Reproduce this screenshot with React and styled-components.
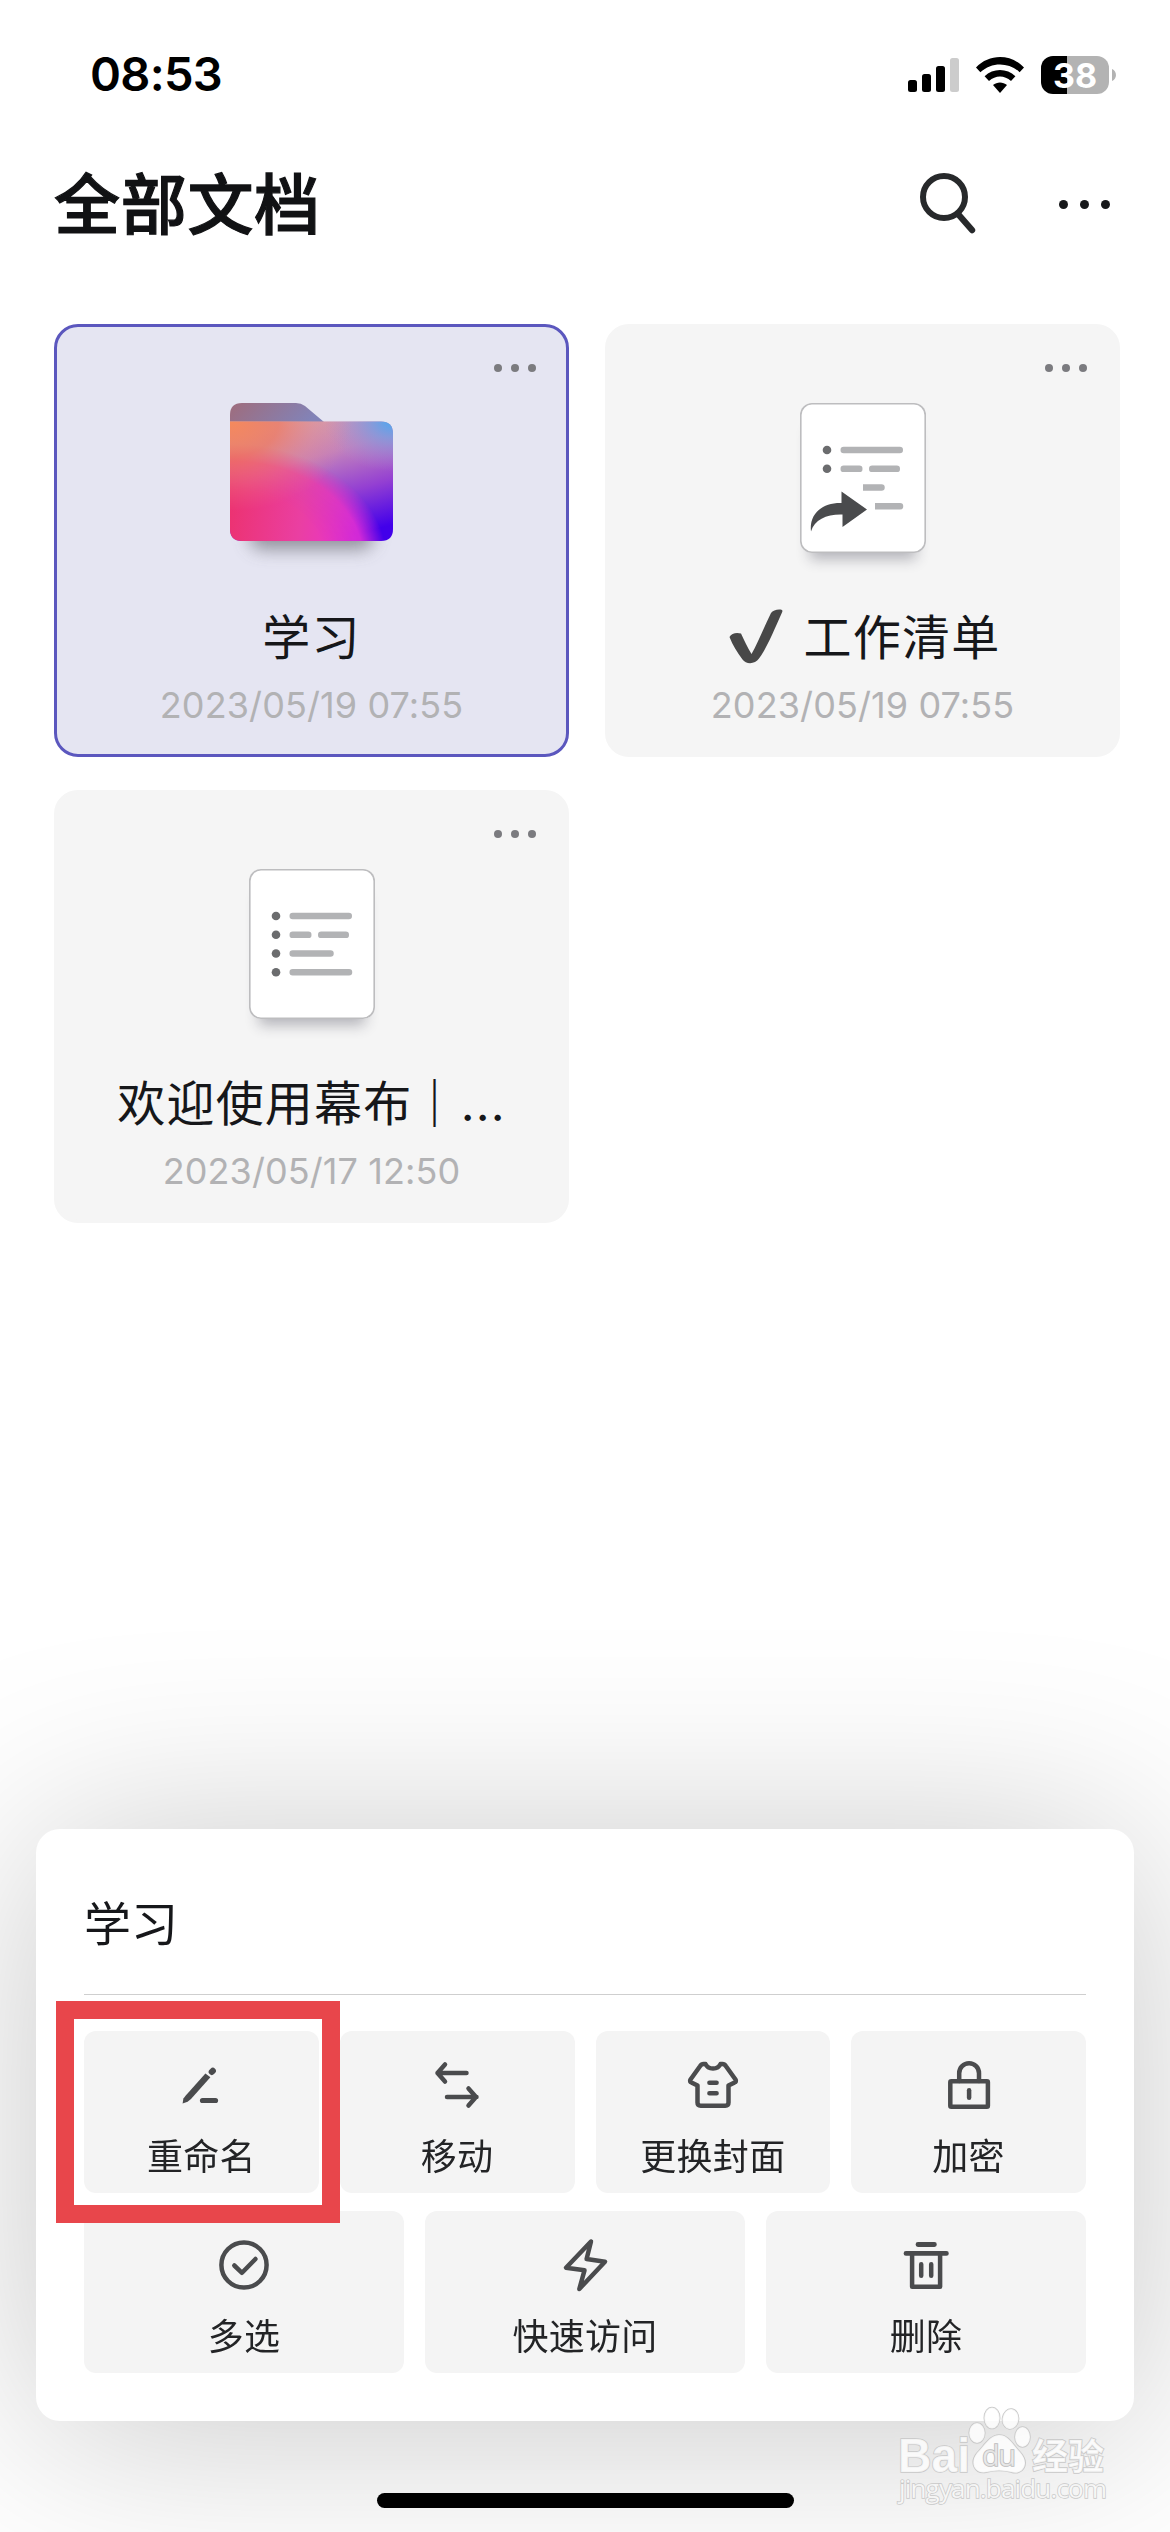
import React from 'react';
import styled, { createGlobalStyle } from 'styled-components';

const GlobalStyle = createGlobalStyle`
  * {
    box-sizing: border-box;
  }
  body {
    margin: 0;
    background: #fff;
    font-family: Inter, 'Noto Sans CJK SC', sans-serif;
  }
  svg {
    display: block;
    overflow: visible;
  }
`;

const docs = [
  { title: '学习', date: '2023/05/19 07:55', type: 'folder', selected: true },
  { title: '工作清单', date: '2023/05/19 07:55', type: 'shared', checked: true },
  { title: '欢迎使用幕布', more: '...', date: '2023/05/17 12:50', type: 'doc' }
];

const EditIcon = () => (
  <Icon viewBox="0 0 54 54">
    <path
      d="M31.4 15.4 L12 37.2 L9.4 40.4 L8.6 45.6 L13.6 43.8 L17 41 L36.4 19.2 Z"
      fill="currentColor"
      stroke="none"
    />
    <path d="M37.8 13.9 L38.8 12.9" strokeWidth="6.2" />
    <path d="M28.5 42.5 H41.5" strokeWidth="5.2" />
  </Icon>
);

const MoveIcon = () => (
  <Icon viewBox="0 0 54 54">
    <path d="M36.5 15 H7.5 M15 6.5 L7.5 15 L15 23.5" />
    <path d="M17 39 H46.5 M38.5 30.5 L46 39 L38.5 47.5" />
  </Icon>
);

const CoverIcon = () => (
  <Icon viewBox="0 0 54 54">
    <path d="M17.5 6 H19.5 C22 12 32 12 34.5 6 H36.5 C38 6 39 6.8 40 8.3 L49.5 21.5 C50.5 23 49.8 24 48.6 24.4 L42.5 27.5 V44.5 C42.5 46.8 41.5 47.7 39.3 47.7 H14.7 C12.5 47.7 11.5 46.8 11.5 44.5 V27.5 L5.4 24.4 C4.2 24 3.5 23 4.5 21.5 L14 8.3 C15 6.8 16 6 17.5 6 Z" />
    <path d="M23.4 24.7 H30.6 M23.4 35.3 H30.6" />
  </Icon>
);

const LockIcon = () => (
  <Icon viewBox="0 0 54 54">
    <rect x="8.3" y="23.3" width="37.6" height="25.4" rx="1" />
    <path d="M17.2 23 V15.2 A9.9 9.9 0 0 1 37 15.2 V23" />
    <path d="M27.1 32.3 V39.7" />
  </Icon>
);

const CheckIcon = () => (
  <Icon viewBox="0 0 54 54">
    <circle cx="27" cy="27" r="22.6" />
    <path d="M17.3 27.5 L25 34.8 L38.5 21" />
  </Icon>
);

const BoltIcon = () => (
  <Icon viewBox="0 0 54 54">
    <path d="M33 3.5 L8 29.7 L26.5 32.3 L21.3 51 L47 23.7 L28.6 21 Z" />
  </Icon>
);

const TrashIcon = () => (
  <Icon viewBox="0 0 54 54">
    <path d="M19 6.5 H35.4 M7 15.4 H47.4" strokeWidth="4.8" />
    <path d="M13.1 17 V48.7 H41.1 V17" />
    <path d="M22.2 26.3 V37.7 M32.2 26.3 V37.7" />
  </Icon>
);

const rowOne = [
  { label: '重命名', icon: EditIcon, marked: true },
  { label: '移动', icon: MoveIcon },
  { label: '更换封面', icon: CoverIcon },
  { label: '加密', icon: LockIcon }
];

const rowTwo = [
  { label: '多选', icon: CheckIcon },
  { label: '快速访问', icon: BoltIcon },
  { label: '删除', icon: TrashIcon }
];

const StatusBar = () => (
  <Status>
    <Time>08:53</Time>
    <StatusIcons>
      <svg width="51" height="34" viewBox="0 0 51 34">
        <rect x="0" y="22" width="9" height="12" rx="2.5" />
        <rect x="14" y="16" width="9" height="18" rx="2.5" />
        <rect x="28" y="8" width="9" height="26" rx="2.5" />
        <rect x="42" y="0" width="9" height="34" rx="2.5" fill="#ccc" />
      </svg>
      <svg width="48" height="36" viewBox="0 0 48 36">
        <path d="M0 10.5 C13 -3.5 35 -3.5 48 10.5 L43.6 15.2 C32.5 4.8 15.5 4.8 4.4 15.2 Z" />
        <path d="M8.6 19.3 C17 10.8 31 10.8 39.4 19.3 L35 24 C28.5 18 19.5 18 13 24 Z" />
        <path d="M17 28 C21 24.6 27 24.6 31 28 L24 36 Z" />
      </svg>
      <Battery>
        <BatteryBody>38</BatteryBody>
        <svg width="4" height="12" viewBox="0 0 4 12">
          <path d="M0 0 C5.3 2 5.3 10 0 12 Z" fill="#b3b3b3" />
        </svg>
      </Battery>
    </StatusIcons>
  </Status>
);

const FolderArt = () => (
  <svg width="163" height="139" viewBox="0 0 163 139">
    <defs>
      <linearGradient id="tab" x1="0" y1="0" x2="1" y2="0.2">
        <stop offset="0" stopColor="#9f6c7c" />
        <stop offset="1" stopColor="#8283b8" />
      </linearGradient>
      <linearGradient id="base" x1="0.4" y1="0" x2="0.8" y2="1">
        <stop offset="0" stopColor="#d2a6b0" />
        <stop offset="0.3" stopColor="#c283bd" />
        <stop offset="0.62" stopColor="#9440d2" />
        <stop offset="0.95" stopColor="#4200ea" />
      </linearGradient>
      <radialGradient id="warm" cx="0" cy="0" r="0.75">
        <stop offset="0" stopColor="#f58a5c" />
        <stop offset="0.4" stopColor="#f0785f" stopOpacity="0.75" />
        <stop offset="0.7" stopColor="#ee8280" stopOpacity="0.35" />
        <stop offset="1" stopColor="#ec7a90" stopOpacity="0" />
      </radialGradient>
      <radialGradient id="sky" cx="1" cy="0" r="0.42">
        <stop offset="0" stopColor="#4aa8f2" />
        <stop offset="0.35" stopColor="#7c9ce0" stopOpacity="0.8" />
        <stop offset="1" stopColor="#a888d4" stopOpacity="0" />
      </radialGradient>
      <linearGradient id="pinkFill" x1="0" y1="0.6" x2="1" y2="0.7">
        <stop offset="0" stopColor="#ec3270" />
        <stop offset="0.45" stopColor="#ea3fa2" />
        <stop offset="0.8" stopColor="#ea30d4" />
      </linearGradient>
      <radialGradient id="pinkMask" cx="0" cy="1.15" r="0.96">
        <stop offset="0.6" stopColor="#fff" />
        <stop offset="0.85" stopColor="#fff" stopOpacity="0.85" />
        <stop offset="1" stopColor="#fff" stopOpacity="0" />
      </radialGradient>
      <mask id="pink">
        <rect y="18" width="163" height="120" fill="url(#pinkMask)" />
      </mask>
      <clipPath id="body">
        <path d="M0 18.5 H151 Q163 18.5 163 30.5 V126 Q163 138 151 138 H12 Q0 138 0 126 Z" />
      </clipPath>
      <filter id="soft" x="-30%" y="-80%" width="160%" height="260%">
        <feGaussianBlur stdDeviation="9" />
      </filter>
    </defs>
    <rect x="20" y="105" width="123" height="41" rx="12" fill="#55555f" opacity="0.6" filter="url(#soft)" />
    <path d="M0 19 V12 Q0 0 12 0 H66 Q71 0 75 3 L94 19 Z" fill="url(#tab)" />
    <g clipPath="url(#body)">
      <rect y="18" width="163" height="120" fill="url(#base)" />
      <rect y="18" width="163" height="120" fill="url(#sky)" />
      <rect y="18" width="163" height="120" fill="url(#pinkFill)" mask="url(#pink)" />
      <rect y="18" width="163" height="120" fill="url(#warm)" />
    </g>
  </svg>
);

const PageArt = ({ shared }) => (
  <Paper>
    <svg width="126" height="150" viewBox="0 0 126 150">
      <g fill="#6b6c6e">
        <circle cx="27" cy="47" r="4.3" />
        <circle cx="27" cy="65.8" r="4.3" />
        {!shared && <circle cx="27" cy="84.5" r="4.3" />}
        {!shared && <circle cx="27" cy="103.3" r="4.3" />}
      </g>
      <g fill="#b2b3b5">
        <rect x="40.5" y="43.8" width="62.5" height="6.5" rx="3.2" />
        <rect x="40.5" y="62.6" width="22" height="6.5" rx="3.2" />
        <rect x="69" y="62.6" width="31" height="6.5" rx="3.2" />
        {shared ? (
          <path d="M63 81.3 H81.5 a3.2 3.2 0 0 1 0 6.5 H63 Z M75 100 H100 a3.2 3.2 0 0 1 0 6.5 H75 Z" />
        ) : (
          <path d="M43.7 81.3 H81.5 a3.2 3.2 0 0 1 0 6.5 H43.7 a3.2 3.2 0 0 1 0 -6.5 Z M43.7 100 H100 a3.2 3.2 0 0 1 0 6.5 H43.7 a3.2 3.2 0 0 1 0 -6.5 Z" />
        )}
      </g>
      {shared && (
        <path
          d="M11 128.5 C9 111 22 99.5 41.5 100 V88.5 L67 106.5 L42.5 124 V111.5 C27 111 14.5 116.5 11 128.5 Z"
          fill="#4a4b4d"
        />
      )}
    </svg>
  </Paper>
);

const HeavyCheck = () => (
  <svg width="56" height="54" viewBox="-4 -2 56 54">
    <path
      d="M0.5 28 C2.5 24.5 7 23 12 24.5 C15 31 18.5 38.5 22.5 45 C29 34 35 18 42 4 C44 1.5 49 -0.2 53 1 C53.6 1.6 53.5 2.5 53 3.5 C46 19 37.5 40 30 49.5 C26 55.5 17 55.5 13.5 50.5 C8.5 43.5 3.5 36 0.5 28 Z"
      fill="#484848"
    />
  </svg>
);

const Watermark = () => (
  <WatermarkBox>
    <svg width="220" height="110" viewBox="0 0 220 110">
      <g fill="#fff" fillOpacity="0.8" stroke="#c8c8c8" strokeWidth="1.6" paintOrder="stroke">
        <text
          x="15"
          y="72"
          textLength="72"
          lengthAdjust="spacingAndGlyphs"
          fontFamily="Liberation Sans"
          fontWeight="700"
          fontSize="48"
        >
          Bai
        </text>
        <ellipse cx="94" cy="33" rx="7.8" ry="10" />
        <ellipse cx="109" cy="18" rx="7.7" ry="10.5" />
        <ellipse cx="127.5" cy="19" rx="8" ry="10" transform="rotate(8 127.5 19)" />
        <ellipse cx="139.5" cy="37" rx="7.5" ry="10" />
        <path d="M116 35 C126 35 130 45 137 52 C148 64 139 76 128 72 C120 70 112 70 104 72 C92 75 86 63 94 53 C101 46 107 35 116 35 Z" />
        <text
          x="99"
          y="66"
          textLength="34"
          fontFamily="Open Sans"
          fontSize="29"
          fill="#ececec"
          stroke="#bdbdbd"
        >
          du
        </text>
        <text
          x="149"
          y="70"
          textLength="72"
          fontFamily="Noto Sans CJK SC"
          fontWeight="700"
          fontSize="36"
        >
          经验
        </text>
        <text x="16" y="98" textLength="208" fontFamily="Open Sans" fontSize="26" strokeWidth="1.4">
          jingyan.baidu.com
        </text>
      </g>
    </svg>
  </WatermarkBox>
);

const DocCard = ({ doc }) => (
  <Card $selected={doc.selected}>
    <CardMenu>
      <Dot $size={8} />
      <Dot $size={8} />
      <Dot $size={8} />
    </CardMenu>
    <Art>{doc.type === 'folder' ? <FolderArt /> : <PageArt shared={doc.type === 'shared'} />}</Art>
    <CardTitle>
      {doc.checked && <HeavyCheck />}
      <span>
        {doc.title}
        {doc.more && <Divider>｜</Divider>}
        {doc.more}
      </span>
    </CardTitle>
    <CardDate>{doc.date}</CardDate>
  </Card>
);

const Action = ({ action }) => {
  const ActionIcon = action.icon;
  return (
    <ActionButton>
      <ActionIcon />
      {action.label}
      {action.marked && <Marker />}
    </ActionButton>
  );
};

export default function App() {
  return (
    <Screen>
      <GlobalStyle />
      <StatusBar />
      <Header>
        <Heading>全部文档</Heading>
        <HeaderTools>
          <svg width="56" height="62" viewBox="0 0 56 62" fill="none" stroke="#27292b">
            <circle cx="24" cy="24" r="21" strokeWidth="6" />
            <path d="M38 41 L52 57" strokeWidth="6.4" strokeLinecap="round" />
          </svg>
          <MoreDots>
            <Dot $size={9} $dark />
            <Dot $size={9} $dark />
            <Dot $size={9} $dark />
          </MoreDots>
        </HeaderTools>
      </Header>
      <Grid>
        {docs.map(doc => (
          <DocCard key={doc.title} doc={doc} />
        ))}
      </Grid>
      <Sheet>
        <SheetTitle>学习</SheetTitle>
        <ActionRow $columns={4}>
          {rowOne.map(action => (
            <Action key={action.label} action={action} />
          ))}
        </ActionRow>
        <ActionRow $columns={3}>
          {rowTwo.map(action => (
            <Action key={action.label} action={action} />
          ))}
        </ActionRow>
      </Sheet>
      <HomeIndicator />
      <Watermark />
    </Screen>
  );
}

const Screen = styled.div`
  position: relative;
  width: 1170px;
  height: 2532px;
  overflow: hidden;
  background: #fff;
`;

const Status = styled.div`
  display: flex;
  justify-content: space-between;
  align-items: center;
  height: 150px;
  padding: 0 54px 0 90px;
`;

const Time = styled.div`
  padding-bottom: 3px;
  font-size: 47px;
  font-weight: 600;
  letter-spacing: -0.7px;
  color: #000;
`;

const StatusIcons = styled.div`
  display: flex;
  align-items: center;
  gap: 17px;
`;

const Battery = styled.div`
  display: flex;
  align-items: center;
  gap: 3px;
`;

const BatteryBody = styled.div`
  display: flex;
  align-items: center;
  justify-content: center;
  width: 68px;
  height: 38px;
  border-radius: 12px;
  background: linear-gradient(to right, #000 38%, #b3b3b3 38%);
  color: #fff;
  font-size: 34px;
  font-weight: 700;
`;

const Header = styled.header`
  display: flex;
  justify-content: space-between;
  align-items: center;
  height: 108px;
  padding: 0 60px 0 54px;
`;

const Heading = styled.h1`
  margin: 0;
  padding-bottom: 8px;
  font-family: 'Noto Sans CJK SC', sans-serif;
  font-size: 66px;
  font-weight: 500;
  line-height: 100px;
  letter-spacing: 0.7px;
  color: #111214;
  -webkit-text-stroke: 1.2px #111214;
`;

const HeaderTools = styled.div`
  display: flex;
  align-items: center;
  gap: 83px;
`;

const MoreDots = styled.div`
  display: flex;
  gap: 12px;
`;

const Dot = styled.span`
  width: ${props => props.$size}px;
  height: ${props => props.$size}px;
  border-radius: 50%;
  background: ${props => (props.$dark ? '#17181a' : '#7b7b7f')};
`;

const Grid = styled.main`
  display: grid;
  grid-template-columns: 515px 515px;
  grid-auto-rows: 433px;
  gap: 33px 36px;
  padding: 66px 50px 0 54px;
`;

const Card = styled.article`
  display: flex;
  flex-direction: column;
  align-items: center;
  border: 3px solid ${props => (props.$selected ? '#5b57be' : '#f5f5f5')};
  border-radius: 24px;
  background: ${props => (props.$selected ? '#e5e5f2' : '#f5f5f5')};
`;

const CardMenu = styled.div`
  display: flex;
  align-self: flex-end;
  gap: 9px;
  padding: 37px 30px 0 0;
`;

const Art = styled.div`
  height: 199px;
  padding-top: 31px;
`;

const Paper = styled.div`
  width: 126px;
  height: 150px;
  border-radius: 12px;
  background: #fff;
  box-shadow: inset 0 0 0 1.6px #bdbdbf, 0 16px 14px -10px rgba(40, 40, 60, 0.32);
`;

const CardTitle = styled.div`
  display: flex;
  align-items: center;
  gap: 23px;
  height: 72px;
  margin-top: 27px;
  font-size: 48px;
  letter-spacing: 1.2px;
  color: #16171a;
`;

const Divider = styled.span`
  margin: 0 1px 0 -2px;
  font-weight: 700;
`;

const CardDate = styled.div`
  height: 44px;
  margin-top: 13px;
  font-size: 36px;
  line-height: 44px;
  letter-spacing: 0.1px;
  color: #b2b2b4;
`;

const Sheet = styled.section`
  position: absolute;
  top: 1829px;
  left: 36px;
  width: 1098px;
  height: 592px;
  padding: 0 48px;
  border-radius: 24px;
  background: #fff;
  filter: drop-shadow(0 10px 100px rgba(0, 0, 0, 0.22));
`;

const SheetTitle = styled.h2`
  height: 166px;
  margin: 0 0 36px;
  padding-top: 24px;
  border-bottom: 1px solid #cfcfcf;
  font-size: 47px;
  font-weight: 400;
  line-height: 142px;
  color: #16171a;
`;

const ActionRow = styled.div`
  display: grid;
  grid-template-columns: repeat(${props => props.$columns}, 1fr);
  gap: 21px;
  margin-bottom: 18px;
`;

const ActionButton = styled.div`
  position: relative;
  display: flex;
  flex-direction: column;
  align-items: center;
  gap: 19px;
  height: 162px;
  padding-top: 27px;
  border-radius: 12px;
  background: #f4f4f4;
  font-size: 36px;
  line-height: 52px;
  letter-spacing: 0.3px;
  color: #232426;
`;

const Icon = styled.svg`
  width: 54px;
  height: 54px;
  color: #4a4b4d;
  fill: none;
  stroke: currentColor;
  stroke-width: 4.5;
  stroke-linecap: round;
  stroke-linejoin: round;
`;

const Marker = styled.div`
  position: absolute;
  top: -30px;
  left: -28px;
  z-index: 1;
  width: 284px;
  height: 222px;
  border: 18px solid #e8464b;
`;

const HomeIndicator = styled.div`
  position: absolute;
  bottom: 24px;
  left: 377px;
  width: 417px;
  height: 15px;
  border-radius: 8px;
  background: #000;
`;

const WatermarkBox = styled.div`
  position: absolute;
  right: 67px;
  bottom: 22px;
`;
